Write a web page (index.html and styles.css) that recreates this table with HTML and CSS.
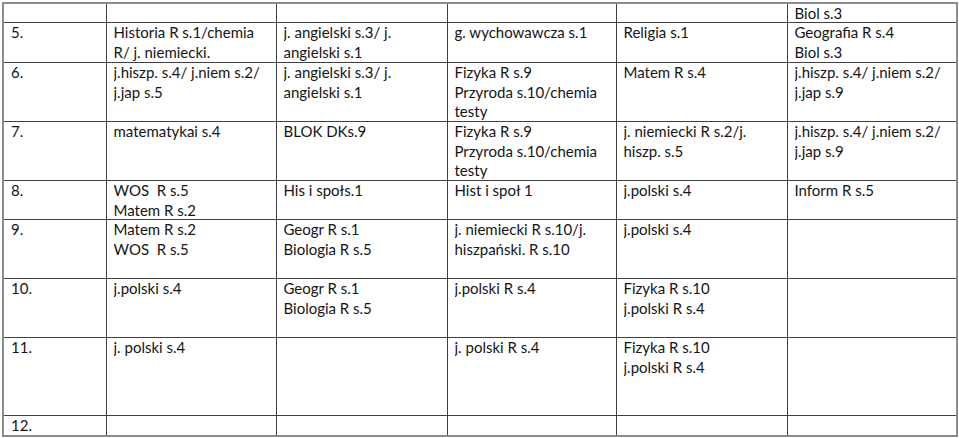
FILE: index.html
```html
<!DOCTYPE html>
<html lang="pl">
<head>
<meta charset="utf-8">
<title>Plan lekcji</title>
<link rel="stylesheet" href="styles.css">
</head>
<body>
<div class="page">
<table class="plan">
<colgroup>
<col class="c1"><col class="c2"><col class="c3"><col class="c4"><col class="c5"><col class="c6">
</colgroup>
<tbody>
<tr class="r0"><td><div class="cell"></div></td><td><div class="cell"></div></td><td><div class="cell"></div></td><td><div class="cell"></div></td><td><div class="cell"></div></td><td><div class="cell">Biol s.3</div></td></tr>
<tr class="r2"><td><div class="cell">5.</div></td><td><div class="cell">Historia R s.1/chemia<br>R/ j. niemiecki.</div></td><td><div class="cell">j. angielski s.3/ j.<br>angielski s.1</div></td><td><div class="cell">g. wychowawcza s.1</div></td><td><div class="cell">Religia s.1</div></td><td><div class="cell">Geografia R s.4<br>Biol s.3</div></td></tr>
<tr class="r3"><td><div class="cell">6.</div></td><td><div class="cell">j.hiszp. s.4/ j.niem s.2/<br>j.jap s.5</div></td><td><div class="cell">j. angielski s.3/ j.<br>angielski s.1</div></td><td><div class="cell">Fizyka R s.9<br>Przyroda s.10/chemia<br>testy</div></td><td><div class="cell">Matem R s.4</div></td><td><div class="cell">j.hiszp. s.4/ j.niem s.2/<br>j.jap s.9</div></td></tr>
<tr class="r3"><td><div class="cell">7.</div></td><td><div class="cell">matematykai s.4</div></td><td><div class="cell">BLOK DKs.9</div></td><td><div class="cell">Fizyka R s.9<br>Przyroda s.10/chemia<br>testy</div></td><td><div class="cell">j. niemiecki R s.2/j.<br>hiszp. s.5</div></td><td><div class="cell">j.hiszp. s.4/ j.niem s.2/<br>j.jap s.9</div></td></tr>
<tr class="r2s"><td><div class="cell">8.</div></td><td><div class="cell">WOS&nbsp; R s.5<br>Matem R s.2</div></td><td><div class="cell">His i społs.1</div></td><td><div class="cell">Hist i społ 1</div></td><td><div class="cell">j.polski s.4</div></td><td><div class="cell">Inform R s.5</div></td></tr>
<tr class="r3"><td><div class="cell">9.</div></td><td><div class="cell">Matem R s.2<br>WOS&nbsp; R s.5</div></td><td><div class="cell">Geogr R s.1<br>Biologia R s.5</div></td><td><div class="cell">j. niemiecki R s.10/j.<br>hiszpański. R s.10</div></td><td><div class="cell">j.polski s.4</div></td><td><div class="cell"></div></td></tr>
<tr class="r3"><td><div class="cell">10.</div></td><td><div class="cell">j.polski s.4</div></td><td><div class="cell">Geogr R s.1<br>Biologia R s.5</div></td><td><div class="cell">j.polski R s.4</div></td><td><div class="cell">Fizyka R s.10<br>j.polski R s.4</div></td><td><div class="cell"></div></td></tr>
<tr class="r4"><td><div class="cell">11.</div></td><td><div class="cell">j. polski s.4</div></td><td><div class="cell"></div></td><td><div class="cell">j. polski R s.4</div></td><td><div class="cell">Fizyka R s.10<br>j.polski R s.4</div></td><td><div class="cell"></div></td></tr>
<tr class="r1"><td><div class="cell">12.</div></td><td><div class="cell"></div></td><td><div class="cell"></div></td><td><div class="cell"></div></td><td><div class="cell"></div></td><td><div class="cell"></div></td></tr>
</tbody>
</table>
</div>
</body>
</html>
```
FILE: styles.css
```css
html, body {
  margin: 0;
  padding: 0;
  background: #ffffff;
}
.page {
  padding: 2px 0 0 2px;
}
.plan {
  border-collapse: collapse;
  table-layout: fixed;
  width: 954px;
  border: 2px solid #8c8c8c;
  font-family: Lato, "Liberation Sans", sans-serif;
  font-size: 15px;
  line-height: 19.5px;
  color: #151515;
}
.c1 { width: 103px; }
.c2 { width: 170px; }
.c3 { width: 171px; }
.c4 { width: 169px; }
.c5 { width: 171px; }
.c6 { width: 170px; }
.plan td {
  border: 1px solid #404040;
  padding: 0 7px;
  vertical-align: top;
}
.cell {
  overflow: hidden;
  white-space: nowrap;
}
.r0 .cell { height: 18px; }
.r2 .cell { height: 39px; }
.r2s .cell { height: 38px; }
.r3 .cell { height: 58px; }
.r4 .cell { height: 77px; }
.r1 .cell { height: 19px; }
```
